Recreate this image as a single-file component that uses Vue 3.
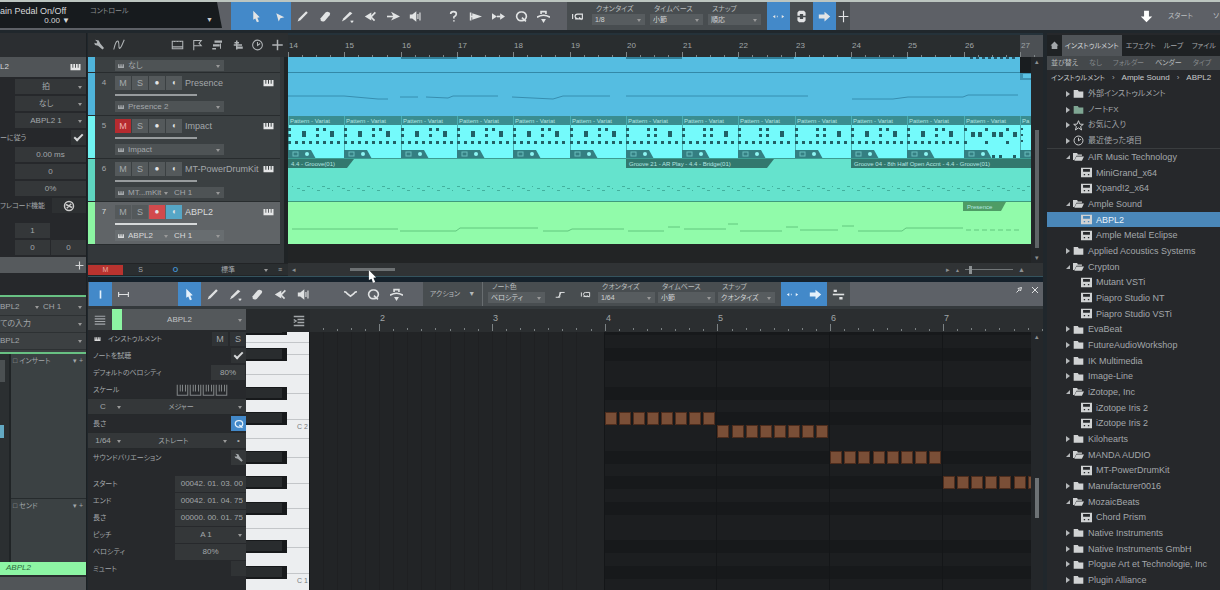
<script setup>
import { h } from 'vue'

// Each shape is [path, mode]: f = filled, s = stroked
const shapes = {
  arrow: [['M4 1 L12 9 L9 9.5 L11 14 L8.5 15 L6.5 10.5 L4 12 Z', 'f']],
  range: [['M4 4 L14 9 L9 10 L7 14 Z', 'f']],
  pencil: [['M2 14 L3.5 10.5 L12.5 1.5 L14.5 3.5 L5.5 12.5 Z', 'f']],
  brush: [['M1 14 L3 10 L11 2 L14 4 L5 12 Z', 'f'], ['M12 13 L13.5 15 L15 13', 's']],
  eraser: [['M2 10 L8 3 Q9 2 10.5 2 L13 3 Q14.5 4.5 13 6.5 L7 13.5 Q4 15 2 13 Z', 'f']],
  mute: [['M1 8 L9 3 V13 Z', 'f'], ['M7 10 L14 3 M8 8 L13 13', 's2']],
  bend: [['M0 8 H9', 's2'], ['M5 2 L16 8 L5 13 L8 8 Z', 'f']],
  speaker: [['M1 5.5 H4 L9 1.5 V14.5 L4 10.5 H1 Z', 'f'], ['M11 5 V11 M13.5 3 V13', 's']],
  help: [['M4.5 5 Q4.5 2 8 2 Q11.5 2 11.5 5 Q11.5 7 8.5 8.5 V10.5 M8.5 12.5 V14', 's2']],
  startTo: [['M2 3 V13 M2 8 H8', 's2'], ['M4 4 L16 8 L4 12 Z', 'f']],
  toEnd: [['M0 4 L6 8 L0 12 Z M10 4 L16 8 L10 12 Z', 'f'], ['M6 8 H10', 's2']],
  q: [['M8 2.5 A5.3 5.3 0 1 0 8 13 A5.3 5.3 0 1 0 8 2.5 M8.5 9.5 L13.5 14', 's2']],
  macro: [['M0 9 Q8 4 16 9 M5 5 V2 H11 V5', 's2'], ['M5 11 H11 L8 16 Z', 'f']],
  smile: [['M0 5 Q2 4 4 7 L8 10 L12 7 Q14 4 16 5', 's2']],
  iq: [['M2 5 V11 M5 11 H14 V5 H8 Q5 5 5 8 Q5 10 9 11 M10 9 L13 12', 's']],
  dots: [['M1 8 L4 6 V10 Z M15 8 L12 6 V10 Z M6 7 H7 V9 H6 Z', 'f']],
  updown: [['M5 1 H11 L13 3 V7 H10 V5 H6 V7 H3 V3 Z M3 9 H6 V11 H10 V9 H13 V13 L11 15 H5 L3 13 Z', 'f']],
  right: [['M1 5.5 H8 V2 L15 8 L8 14 V10.5 H1 Z', 'f']],
  cross: [['M8 1 V15 M2 8 H14', 's']],
  split: [['M1 8 H15', 's2'], ['M2 2 H6 V5 H2 Z M9 11 H13 V14 H9 Z', 'f']],
  down: [['M5 1 H11 V8 H15 L8 15 L1 8 H5 Z', 'f']],
  wrench: [['M2 1 L7 2 L9 6 L14 12 L12 14 L6 9 L2 8 L1 5 L4 6 L5 4 Z', 'f']],
  curve: [['M1 14 Q4 1 7 3 Q8 5 8 11 Q9 15 12 8 L15 1', 's']],
  film: [['M1 3 H15 V13 H1 Z M1 10.5 H15 M4 3 V4 M8 3 V4 M12 3 V4', 's']],
  flag: [['M3 15 V2 H13 L10 5.5 L13 9 H3', 's']],
  steps: [['M4 2 H14 V5 H4 Z M2 7 H11 V10 H2 Z M1 12 H6 V14 H1 Z', 'f'], ['M12 6 V13', 's']],
  mix: [['M3 8 H14 M7 2 V14', 's2'], ['M4 4 H10 V6 H4 Z M6 10 H15 V13 H6 Z', 'f']],
  clock: [['M8 1.5 A6.5 6.5 0 1 0 8 14.5 A6.5 6.5 0 1 0 8 1.5 M8 4 V8.5 L11.5 6', 's']],
  plus: [['M8 1 V15 M1 8 H15', 's2']],
  keys: [['M0 3 H16 V13 H0 Z M3 3 V9 H4.5 V3 Z M7.2 3 V9 H8.8 V3 Z M11.5 3 V9 H13 V3 Z', 'e']],
  folder: [['M1 3 H7 L8.5 5 H15 V14 H1 Z', 'f']],
  open: [['M0 3 H6 L7 5 H13 V7 H5 L2 13 H0 Z M5 8 H16 L13 14 H2 Z', 'f']],
  plug: [['M0 1 H16 V15 H0 Z M3 3 V7 H13 V3 Z M4 10 V12 H6 V10 Z M10 10 V12 H12 V10 Z', 'e']],
  star: [['M8 1 L10 6 L15 6.3 L11 9.5 L12.5 14.5 L8 11.5 L3.5 14.5 L5 9.5 L1 6.3 L6 6 Z', 's']],
  home: [['M8 1 L15 8 H13 V14 H3 V8 H1 Z', 'f']],
  list: [['M1 3 H15 M1 6.5 H15 M1 10 H15 M1 13.5 H15', 's']],
  indent: [['M1 2 H15 M6 6 H15 M6 10 H15 M1 14 H15 M1 6 L4 8 L1 10', 's2']],
  info: [['M7 3 H9 V13 H7 Z', 'f']],
  hbar: [['M2 5 V11 M14 5 V11 M2 8 H14', 's']],
  pin: [['M3 13 L8 8 M6 5 L11 10 L13 3 Z', 's2']],
  close: [['M2 2 L14 14 M14 2 L2 14', 's2']],
  step: [['M1 12 H7 V5 H14 M5 12 L9 5', 's']],
  scale: [['M1 1 V15 H15 V1 M5 1 V10 M8 1 V10 M12 1 V10', 's']],
  record: [['M8 2 A6 6 0 1 0 8 14 A6 6 0 1 0 8 2 M4 6 L12 10 M5 11 L11 5', 's2']],
}
const Icon = (p) =>
  h('svg', { viewBox: '0 0 16 16', 'aria-hidden': 'true' }, shapes[p.n].map(([d, m]) =>
    h('path', m[0] === 's'
      ? { d, fill: 'none', stroke: 'currentColor', 'stroke-width': m === 's2' ? 2 : 1.4 }
      : { d, fill: 'currentColor', 'fill-rule': m === 'e' ? 'evenodd' : 'nonzero' })))
Icon.props = ['n']

const mainTools = ['pencil', 'eraser', 'brush', 'mute', 'bend', 'speaker']
const helpTools = ['help', 'startTo', 'toEnd', 'q', 'macro']
const topFields = [['クオンタイズ', '1/8'], ['タイムベース', '小節'], ['スナップ', '順応']]
const noteTools = ['pencil', 'brush', 'eraser', 'mute', 'speaker']
const editFields = [['クオンタイズ', '1/64'], ['タイムベース', '小節'], ['スナップ', 'クオンタイズ']]
const headTools = ['film', 'flag', 'steps', 'mix', 'clock', 'plus']

const tracks = [
  { no: 4, name: 'Presence', color: '#4fb4da', out: 'Presence 2' },
  { no: 5, name: 'Impact', color: '#70f3f2', out: 'Impact', muted: true },
  { no: 6, name: 'MT-PowerDrumKit', color: '#5fd5c0', out: 'MT...mKit', ch: 'CH 1' },
  { no: 7, name: 'ABPL2', color: '#8cf5a2', out: 'ABPL2', ch: 'CH 1', on: true },
]

// Arrangement time axis
const BAR = 56.3
const barX = (n) => Math.round((n - 14) * BAR)
const bars = Array.from({ length: 14 }, (_, i) => i + 14)
const ticks = bars.flatMap((b) => [0, 1, 2, 3].map((q) => ({ x: barX(b + q / 4), big: q === 0 })))
const hits = bars.flatMap((b) => {
  const x = barX(b)
  if (b === 27) return [0, 1, 2].map((i) => [x + 1, 71 + i * 6, 2, 2])
  if (b === 26) {
    return [[0, 71], [21, 71], [42, 71], [0, 84], [21, 84], [42, 84], [28, 98], [35, 98], [49, 98]]
      .map(([dx, y]) => [x + dx, y, 3, 3])
      .concat([7, 14, 28, 35, 49].map((dx) => [x + dx, 75, 4, 5]))
  }
  const mid = b > 19 && b < 24
  const small = mid ? [[0, 71], [21, 71], [28, 71], [0, 77], [21, 77], [28, 77]]
    : [[0, 71], [28, 71], [35, 71], [0, 77], [28, 77]]
  return small.concat([0, 7, 14, 21, 28, 35, 42, 49].map((d) => [d, 84]))
    .map(([dx, y]) => [x + dx, y, 3, 3])
    .concat((mid ? [42] : [14, 42]).map((dx) => [x + dx, 74, 4, 6]))
})
const drumHits = Array.from({ length: 148 }, (_, i) => [i * 5 + 4, 129 + ((i * 7) % 3) * 2, (i * 5) % 4 ? 3 : 1])
const grooves = [
  { x: 0, w: 66, t: '4.4 - Groove(01)' },
  { x: barX(20), w: 148, t: 'Groove 21 - AR Play - 4.4 - Bridge(01)' },
  { x: barX(24), w: 200, t: 'Groove 04 - 8th Half Open Accnt - 4.4 - Groove(01)' },
]
const lead = 'M0 39 H56 L90 42 H100 M112 40 H130 M138 40 L160 41 L165 39 H210 M224 40 L265 42 L275 39 H322 M338 39 H520 M564 42 H605 L620 40 H675 L680 38 H730'
const bass = 'M4 172 H110 M112 174 H168 L172 171 H250 M255 174 H280 L284 172 H336 M340 174 H376 M380 170 H392 M396 172 H438 M440 167 H450 M452 174 H494 M498 170 H510 M512 173 H550 M554 169 H566 M570 174 H614 L618 171 H675 '

// Piano roll: rows are measured from the top of the grid
const SEMI = 12.83
const rowY = (k) => Math.round(93 + k * SEMI)
const blackRows = [-8, -6, -3, -1, 2, 4, 6, 9, 11]
const whiteEdges = [-6.5, -4, 1, 8, 13, -5.5, -2.5, -0.5, 2.5, 4.5, 6.5, 9.5, 11.5].map(rowY)
const QBAR = 112.8
const rollX = (n) => Math.round(69 + (n - 2) * QBAR)
const rollTicks = Array.from({ length: 54 }, (_, i) => ({ x: rollX(1.375 + i / 8), big: (i + 3) % 8 === 0, mid: i % 2 === 1 }))
const notes = [[4, -1], [5, 0], [6, 2], [7, 4]].flatMap(([b, k]) =>
  Array.from({ length: 8 }, (_, i) => ({ x: rollX(b + i / 8), y: rowY(k) })))

const position = [['スタート', '00042. 01. 03. 00'], ['エンド', '00042. 01. 04. 75'], ['長さ', '00000. 00. 01. 75']]

const tree = [
  ['外部インストゥルメント', 'c', 'folder', 'jp'], ['ノートFX', 'c', 'folder', 'jp fx'], ['お気に入り', 'c', 'star', 'jp'],
  ['最近使った項目', 'c', 'clock', 'jp last'], ['AIR Music Technology', 'o'], ['MiniGrand_x64', 'p'],
  ['Xpand!2_x64', 'p'], ['Ample Sound', 'o'], ['ABPL2', 'p', '', 'picked'], ['Ample Metal Eclipse', 'p'],
  ['Applied Acoustics Systems', 'c'], ['Crypton', 'o'], ['Mutant VSTi', 'p'], ['Piapro Studio NT', 'p'],
  ['Piapro Studio VSTi', 'p'], ['EvaBeat', 'c'], ['FutureAudioWorkshop', 'c'], ['IK Multimedia', 'c'],
  ['Image-Line', 'c'], ['iZotope, Inc', 'o'], ['iZotope Iris 2', 'p'], ['iZotope Iris 2', 'p'],
  ['Kilohearts', 'c'], ['MANDA AUDIO', 'o'], ['MT-PowerDrumKit', 'p'], ['Manufacturer0016', 'c'],
  ['MozaicBeats', 'o'], ['Chord Prism', 'p'], ['Native Instruments', 'c'], ['Native Instruments GmbH', 'c'],
  ['Plogue Art et Technologie, Inc', 'c'], ['Plugin Alliance', 'c'],
].map(([name, kind, icon, mark]) => ({
  name, kind, mark, icon: icon || { c: 'folder', o: 'open', p: 'plug' }[kind],
}))
</script>

<template>
  <div class="daw">
    <header class="topbar">
      <div class="display">
        <div class="param"><span>ain Pedal On/Off</span><button class="val">0.00 ▼</button></div>
        <span class="ctl">コントロール</span>
        <button class="more" aria-label="メニュー">▼</button>
      </div>
      <div class="blue lead">
        <button class="tb" aria-label="矢印"><Icon n="arrow" /></button>
        <button class="tb" aria-label="範囲"><Icon n="range" /></button>
      </div>
      <div class="tools main"><button v-for="t in mainTools" :key="t" class="tb" :aria-label="t"><Icon :n="t" /></button></div>
      <div class="tools aux"><button v-for="t in helpTools" :key="t" class="tb" :aria-label="t"><Icon :n="t" /></button></div>
      <div class="snap upper">
        <button class="tb iq" aria-label="IQ"><Icon n="iq" /></button>
        <label v-for="f in topFields" :key="f[0]" class="field">
          <span>{{ f[0] }}</span>
          <span class="sel"><select><option>{{ f[1] }}</option></select></span>
        </label>
        <button class="tb blue first" aria-label="スナップ"><Icon n="dots" /></button>
        <button class="tb" aria-label="縦"><Icon n="updown" /></button>
        <button class="tb blue" aria-label="追従"><Icon n="right" /></button>
        <button class="tb end" aria-label="カーソル"><Icon n="cross" /></button>
      </div>
      <div class="pages">
        <button class="tb" aria-label="ダウンロード"><Icon n="down" /></button>
        <button>スタート</button>
        <button>ソ</button>
      </div>
    </header>

    <main class="body">
      <aside class="left">
        <div class="lhead"></div>
        <div class="ltitle"><span>L2</span><Icon n="keys" class="kb" /></div>
        <div v-for="v in ['拍', 'なし', 'ABPL2 1']" :key="v" class="lrow">
          <span class="sel box"><select :aria-label="v"><option>{{ v }}</option></select></span>
        </div>
        <label class="lrow text"><span>ーに従う</span><input type="checkbox" checked></label>
        <div v-for="v in ['0.00 ms', '0', '0%']" :key="v" class="lrow"><input class="box" :value="v" :aria-label="'値 ' + v"></div>
        <div class="lrow text pre"><span>フレコード機能</span><button aria-label="記録"><Icon n="record" /></button></div>
        <div class="lrow one"><input class="box" value="1" aria-label="開始"></div>
        <div class="lrow two"><input class="box" value="0" aria-label="下限"><input class="box" value="0" aria-label="上限"></div>
        <div class="adder"><button aria-label="追加"><Icon n="plus" /></button></div>
        <div class="channel">
          <div class="crow"><span class="sel"><select aria-label="出力"><option>BPL2</option></select></span><span class="sel"><select aria-label="チャンネル"><option>CH 1</option></select></span></div>
          <div class="crow"><span class="sel"><select aria-label="入力"><option>ての入力</option></select></span></div>
          <div class="crow"><span class="sel"><select aria-label="楽器"><option>BPL2</option></select></span></div>
        </div>
        <div class="strips">
          <div class="meter"><i></i><b></b></div>
          <div class="racks">
            <div class="rack"><span>□ インサート</span><span>▾ +</span></div>
            <div class="rack"><span>□ センド</span><span>▾ +</span></div>
          </div>
        </div>
        <div class="chname">ABPL2</div>
        <div class="lfoot"></div>
      </aside>

      <section class="center">
        <div class="arrange">
          <div class="ahead">
            <button aria-label="設定"><Icon n="wrench" /></button>
            <button aria-label="オートメーション"><Icon n="curve" class="wide" /></button>
            <span class="grow"></span>
            <button v-for="t in headTools" :key="t" :aria-label="t"><Icon :n="t" /></button>
          </div>
          <div class="aruler">
            <svg class="fill">
              <rect :x="barX(27)" y="0" width="30" height="24" fill="#4c5054" />
              <rect v-for="(t, i) in ticks" :key="i" :x="t.x" :y="t.big ? 17 : 20" width="1" :height="t.big ? 6 : 2" fill="#808688" />
              <text v-for="b in bars" :key="b" :x="barX(b) + 1" y="13" class="num">{{ b }}</text>
            </svg>
          </div>
          <div class="tracks">
            <div class="track part"><i class="strip s0"></i><div class="tmain"><span class="sel out"><Icon n="keys" /><select aria-label="出力 3"><option>なし</option></select></span></div></div>
            <div v-for="t in tracks" :key="t.no" class="track" :class="{ on: t.on }">
              <i class="strip" :style="{ background: t.color }"></i>
              <span class="no">{{ t.no }}</span>
              <div class="tmain">
                <div class="trow">
                  <button class="k" :class="{ red: t.muted }">M</button><button class="k">S</button>
                  <button class="k" :class="{ rec: t.on }">●</button><button class="k" :class="{ mon: t.on }">◖</button>
                  <span class="tname">{{ t.name }}</span><Icon n="keys" class="kb" />
                </div>
                <input class="vol" type="range" :aria-label="t.name + ' 音量'">
                <div class="outs">
                  <span class="sel out" :class="{ half: t.ch }"><Icon n="keys" /><select :aria-label="t.name + ' 出力'"><option>{{ t.out }}</option></select></span>
                  <span v-if="t.ch" class="sel out ch"><select :aria-label="t.name + ' チャンネル'"><option>{{ t.ch }}</option></select></span>
                </div>
              </div>
            </div>
          </div>
          <div class="clips">
            <svg class="fill">
              <rect width="100%" height="60" fill="#55bde1" />
              <rect v-for="b in [16, 20, 22, 24]" :key="b" :x="barX(b)" y="0" width="56" height="2" fill="#317f98" />
              <rect v-for="i in 8" :key="i" :x="barX(26) + i * 6" y="0" width="3" height="2" fill="#24586b" />
              <rect y="15" width="100%" height="1" fill="#3389a8" />
              <path :d="lead" class="line" stroke="#378eb0" />
              <rect :x="barX(27)" y="0" width="30" height="16" fill="#191d20" />
              <rect :x="barX(27)" y="16" width="30" height="7" fill="#3f93b3" />
              <rect :x="barX(27) + 3" y="17" width="30" height="4" fill="#5bc2e4" />
              <rect y="59" width="100%" height="43" fill="#74fafb" />
              <rect y="59" width="100%" height="9" fill="#3a8d90" />
              <g v-for="b in bars" :key="b">
                <text :x="barX(b) + 2" y="66" class="tiny">{{ b === 27 ? 'Pa' : 'Pattern - Variat' }}</text>
                <rect :x="barX(b)" y="59" width="1" height="43" fill="#49aeb0" />
                <path :d="`M${barX(b)} 93 h23 l5 9 h-28 z`" fill="#347f82" />
                <rect :x="barX(b) + 5" y="95" width="5" height="4" fill="none" stroke="#69bdbc" />
                <circle :cx="barX(b) + 19" cy="97" r="2" fill="#8df5f2" />
              </g>
              <rect v-for="(d, i) in hits" :key="i" :x="d[0]" :y="d[1]" :width="d[2]" :height="d[3]" fill="#225f65" />
              <rect y="102" width="100%" height="43" fill="#65e3cd" />
              <rect y="101" width="100%" height="1" fill="#3d9d93" />
              <g v-for="g in grooves" :key="g.x">
                <path :d="`M${g.x} 102 h${g.w} l-7 9 h-${g.w - 7} z`" fill="#32786e" />
                <text :x="g.x + 3" y="109" class="tiny">{{ g.t }}</text>
              </g>
              <rect v-for="(d, i) in drumHits" :key="i" :x="d[0]" :y="d[1]" :width="d[2]" height="1" fill="#43b09d" />
              <rect y="145" width="100%" height="42" fill="#91fbaa" />
              <rect y="144" width="100%" height="1" fill="#3f9b7d" />
              <path d="M675 145 h43 l-5 9 h-38 z" fill="#4e9c65" />
              <text x="679" y="152" class="tiny">Presence</text>
              <path :d="bass" class="line" stroke="#62c77f" />
              <path d="M678 173 H732" class="line" stroke="#62c77f" stroke-dasharray="5 3" />
            </svg>
          </div>
          <div class="vbar"><span>▴</span><i class="thumb"></i><span>▾</span></div>
          <div class="afoot">
            <button class="mred">M</button><button>S</button><button class="ring">O</button>
            <span class="sel std"><select aria-label="高さ"><option>標準</option></select></span><button>≡</button>
          </div>
          <div class="hbar">
            <span>◂</span><div class="lane"><i></i>
              <svg class="cursor" viewBox="0 0 10 14" aria-hidden="true"><path d="M1 0 L9 8 L6 8.5 L8 13 L5.5 14 L4 9.5 L1 11 Z" fill="#fff" /></svg>
            </div>
            <span>▸</span><span class="s">▲</span><input type="range" value="8" aria-label="ズーム"><span>▲</span>
          </div>
        </div>

        <div class="editor">
          <div class="ebar">
            <button class="tb blue" aria-label="情報"><Icon n="info" /></button>
            <button class="tb" aria-label="幅"><Icon n="hbar" /></button>
            <button class="tb blue pick" aria-label="矢印"><Icon n="arrow" /></button>
            <div class="tools notes"><button v-for="t in noteTools" :key="t" class="tb" :aria-label="t"><Icon :n="t" /></button></div>
            <div class="tools ops"><button v-for="t in ['smile', 'q', 'macro']" :key="t" class="tb" :aria-label="t"><Icon :n="t" /></button></div>
            <div class="snap lower">
              <button class="act">アクション <span>▼</span></button>
              <label class="field"><span>ノート色</span><span class="sel"><select><option>ベロシティ</option></select></span></label>
              <button class="tb st" aria-label="ステップ"><Icon n="step" /></button>
              <button class="tb st" aria-label="IQ"><Icon n="iq" /></button>
              <label v-for="f in editFields" :key="f[0]" class="field">
                <span>{{ f[0] }}</span>
                <span class="sel"><select><option>{{ f[1] }}</option></select></span>
              </label>
              <button class="tb blue first" aria-label="スナップ"><Icon n="dots" /></button>
              <button class="tb blue" aria-label="追従"><Icon n="right" /></button>
              <button class="tb" aria-label="分割"><Icon n="split" /></button>
            </div>
            <span class="grow"></span>
            <button class="win" aria-label="固定"><Icon n="pin" /></button>
            <button class="win" aria-label="閉じる"><Icon n="close" /></button>
          </div>
          <div class="ebody">
            <div class="inspector">
              <div class="ihead"><Icon n="list" /><i></i><span class="sel"><select aria-label="トラック"><option>ABPL2</option></select></span></div>
              <div class="irow"><span><Icon n="keys" class="mini" />インストゥルメント</span><span class="pair"><button>M</button><button>S</button></span></div>
              <label class="irow"><span>ノートを試聴</span><input type="checkbox" checked></label>
              <label class="irow"><span>デフォルトのベロシティ</span><input class="box pct" value="80%"></label>
              <div class="irow"><span>スケール</span><span class="scales"><Icon v-for="i in 4" :key="i" n="scale" /></span></div>
              <div class="irow bar"><span class="sel a"><select aria-label="ルート"><option>C</option></select></span><span class="sel b"><select aria-label="スケール"><option>メジャー</option></select></span></div>
              <div class="irow"><span>長さ</span><button class="blue sq" aria-label="クオンタイズ"><Icon n="q" /></button></div>
              <div class="irow bar"><span class="sel a"><select aria-label="音価"><option>1/64</option></select></span><span class="sel b"><select aria-label="種類"><option>ストレート</option></select></span><button class="dot">•</button></div>
              <div class="irow gap"><span>サウンドバリエーション</span><button class="box sq" aria-label="編集"><Icon n="wrench" /></button></div>
              <label v-for="p in position" :key="p[0]" class="irow"><span>{{ p[0] }}</span><input class="box pos" :value="p[1]"></label>
              <label class="irow"><span>ピッチ</span><span class="sel box v"><select><option>A 1</option></select></span></label>
              <label class="irow"><span>ベロシティ</span><input class="box v" value="80%"></label>
              <label class="irow"><span>ミュート</span><input type="checkbox"></label>
            </div>
            <div class="khead"><Icon n="indent" /></div>
            <div class="eruler">
              <svg class="fill">
                <rect v-for="(t, i) in rollTicks" :key="i" :x="t.x" :y="t.big ? 15 : t.mid ? 19 : 20" width="1" :height="t.big ? 7 : 2" fill="#7b8183" />
                <text v-for="b in [2, 3, 4, 5, 6, 7]" :key="b" :x="rollX(b) + 1" y="12" class="num big">{{ b }}</text>
              </svg>
            </div>
            <div class="keyboard">
              <svg class="fill">
                <rect width="100%" height="100%" fill="#eceef0" />
                <rect v-for="(y, i) in whiteEdges" :key="i" :y="y" width="100%" height="1" fill="#c3c6c9" />
                <g v-for="k in blackRows" :key="k">
                  <rect :y="rowY(k)" width="41" height="13" fill="#17191b" />
                  <rect :y="rowY(k) + 1" width="36" height="10" fill="#292c2e" />
                </g>
                <text x="51" y="97" class="key">C 2</text>
                <text x="51" y="251" class="key">C 1</text>
              </svg>
            </div>
            <div class="roll">
              <svg class="fill">
                <rect width="100%" height="100%" fill="#222426" />
                <rect v-for="i in 20" :key="i" :x="rollX(1.25 + i / 8)" y="0" width="1" height="100%" fill="#1f2022" />
                <rect :x="rollX(4) - 1" y="0" width="100%" height="100%" fill="#1c1e20" />
                <rect v-for="k in blackRows" :key="k" :x="rollX(4) - 1" :y="rowY(k)" width="100%" height="13" fill="#17191b" />
                <rect v-for="b in [4, 5, 6, 7]" :key="b" :x="rollX(b) - 1" y="0" width="1" height="100%" fill="#141618" />
                <g v-for="(n, i) in notes" :key="i">
                  <rect :x="n.x" :y="n.y" width="12" height="13" fill="#4e2d1d" />
                  <rect :x="n.x + 1" :y="n.y + 1" width="10" height="11" fill="#7a4f37" />
                </g>
              </svg>
            </div>
            <div class="vbar short"><span>▴</span><i class="thumb"></i></div>
          </div>
        </div>
      </section>

      <aside class="browser">
        <nav class="tabs">
          <button aria-label="ホーム"><Icon n="home" /></button><button class="cur">インストゥルメント</button><button>エフェクト</button><button>ループ</button><button>ファイル</button>
        </nav>
        <div class="sort"><span class="hi">並び替え</span><button>なし</button><button>フォルダー</button><button class="hi">ベンダー</button><button>タイプ</button></div>
        <nav class="crumbs"><a href="#">インストゥルメント</a><span>›</span><a href="#">Ample Sound</a><span>›</span><a href="#">ABPL2</a></nav>
        <ul class="tree">
          <li v-for="(r, i) in tree" :key="i" :class="[r.kind, r.mark]">
            <button><i v-if="r.kind !== 'p'" class="tw"></i><Icon :n="r.icon" /><span>{{ r.name }}</span></button>
          </li>
        </ul>
      </aside>
    </main>
  </div>
</template>

<style>
html, body { background: #1d2023; overflow: hidden; }
</style>

<style scoped>
.daw, .daw * { box-sizing: border-box; }
.daw {
  height: 100vh; display: grid; grid-template-rows: 30px minmax(0, 1fr); background: #20272c; color: #a3a7aa;
  font-family: "Liberation Sans", "Noto Sans CJK JP", sans-serif; font-size: 8px; line-height: 10px;
  font-feature-settings: "palt"; overflow: hidden; white-space: nowrap;
}
button, select, input { font: inherit; color: inherit; font-feature-settings: inherit; background: none; border: 0; padding: 0; margin: 0; border-radius: 0; min-width: 0; }
button { display: inline-flex; align-items: center; justify-content: center; }
svg { width: 12px; height: 12px; flex: none; display: block; }
.fill { width: 100%; height: 100%; }
i { display: block; }
.grow { flex: 1; }
.blue { background: #4389c9; color: #e5f1fb; }
.sel { position: relative; display: flex; align-items: center; min-width: 0; }
.sel select { appearance: none; width: 100%; padding-right: 9px; outline: 0; }
.sel::after { content: ""; position: absolute; right: 4px; top: calc(50% - 1px); border: 2px solid transparent; border-top: 3px solid #999; border-bottom: 0; pointer-events: none; }
.sel.box select { text-align-last: center; }
.box { background: #343739; text-align: center; }

.topbar { display: flex; border-top: 2px solid #bcc5c0; background: #5d6066; }
.topbar .tb { color: #e2e4e5; }
.display { width: 222px; height: 26px; background: #171b1e; clip-path: polygon(0 0, 217px 0, 100% 100%, 0 100%); display: flex; }
.param { width: 90px; display: flex; flex-direction: column; color: #d7d9da; font-size: 9px; padding-top: 4px; }
.param .val { align-self: flex-end; margin-right: 20px; font-size: 8px; }
.ctl { color: #8a8e90; font-size: 7px; padding-top: 4px; }
.more { margin: 12px 9px 0 auto; height: 12px; color: #ccc; font-size: 7px; }
.tb { width: 23px; height: 100%; flex: none; }
.tb svg { width: 13px; height: 13px; }
.lead { margin-left: 9px; padding-left: 14px; display: flex; }
.tools { display: flex; }
.tools .tb { flex: 1; width: auto; }
.main { width: 136px; }
.aux { width: 113px; margin-left: 15px; }
.snap { display: flex; background: #484d50; }
.upper { margin-left: 12px; }
.snap .iq { width: 20px; margin-right: 5px; }
.field { width: 53px; margin-right: 5px; padding-top: 2px; display: flex; flex-direction: column; color: #b9bdbf; font-size: 7px; flex: none; }
.field > span:first-child { padding-left: 4px; }
.field .sel { background: #575c5f; height: 11px; }
.field select { padding-left: 3px; color: #d0d3d4; }
.upper .first { margin-left: 1px; }
.upper .end { width: 14px; }
.pages { margin-left: auto; display: flex; align-items: center; color: #bbbec0; font-size: 7px; }
.pages button:not(.tb) { margin-left: 10px; width: 25px; }
.pages button:last-child:not(.tb) { width: 8px; margin-left: 19px; }
.pages .tb svg { color: #fff; }

.body { display: grid; grid-template-columns: 87px minmax(0, 1fr) 173px; padding-top: 3px; min-height: 0; }

.left { background: #26282b; display: flex; flex-direction: column; min-height: 0; border-right: 1px solid #1c2023; overflow: hidden; }
.lhead { height: 24px; background: #2b2e31; flex: none; }
.ltitle { height: 20px; background: #505457; display: flex; justify-content: space-between; align-items: center; padding: 0 4px 0 0; margin-bottom: 1px; flex: none; color: #d5d7d8; }
.kb { width: 13px; height: 10px; color: #e5e6e7; }
.lrow { height: 17px; flex: none; padding: 1px 0 1px 15px; display: flex; gap: 1px; }
.lrow .box { width: 100%; height: 100%; }
.text { padding-left: 0; align-items: center; justify-content: space-between; font-size: 7px; }
.pre { margin-bottom: 8px; }
.pre button { width: 34px; height: 100%; background: #2d3032; color: #ccc; }
.one .box { width: 35px; }
.adder { height: 16px; margin-top: 1px; background: #565a5d; display: flex; justify-content: flex-end; padding-right: 2px; flex: none; color: #d5d7d8; }
.adder svg { width: 9px; height: 9px; }
.channel { margin-top: 22px; border-top: 2px solid #68c183; border-bottom: 2px solid #68c183; background: #3c4042; flex: none; padding: 2px 0; }
.crow { height: 17px; display: flex; border-bottom: 1px solid #2d3133; }
.crow .sel { flex: 1; }
.strips { flex: 1; display: flex; min-height: 0; }
.meter { width: 11px; background: #2b2f31; border-right: 2px solid #202426; display: flex; flex-direction: column; padding-top: 6px; }
.meter i { height: 22px; width: 5px; background: #4b5052; }
.meter b { height: 13px; width: 4px; margin-top: 43px; background: #63a9c3; }
.racks { flex: 1; display: flex; flex-direction: column; background: #3b4143; font-size: 7px; }
.rack { flex: 0 0 144px; display: flex; justify-content: space-between; padding: 2px 3px 0 2px; }
.rack + .rack { flex: 1; border-top: 1px solid #262b2d; }
.chname { height: 13px; background: #8df5a4; color: #2b6a3c; padding: 1px 0 0 6px; flex: none; font-style: italic; }
.lfoot { height: 15px; background: #515558; flex: none; border-top: 2px solid #2a2d2f; }

.center { display: grid; grid-template-rows: 244px minmax(0, 1fr); gap: 5px; margin: 0 4px 0 1px; min-width: 0; background: #15212b; }
.arrange { display: grid; grid-template-columns: 200px minmax(0, 1fr) 12px; grid-template-rows: 24px minmax(0, 1fr) 13px; background: #222426; border-bottom: 1px solid #34535e; min-width: 0; }
.ahead { background: #2c2f31; display: flex; align-items: center; padding: 0 1px; color: #b0b4b6; }
.ahead button { width: 20px; }
.ahead .wide { width: 16px; }
.ahead svg { width: 13px; }
.aruler { grid-column: 2 / 4; background: #292d2f; border-top: 2px solid #25323a; }
.num { font-size: 8px; fill: #a0a5a7; }
.num.big { font-size: 9px; }
.tiny { font-size: 6px; fill: #b3e6e2; }
.line { fill: none; stroke-width: 1; }
.tracks { background: #33373a; overflow: hidden; display: flex; flex-direction: column; border-right: 4px solid #1f2325; }
.track { height: 43px; flex: none; display: flex; background: #3b4042; border-bottom: 1px solid #282c2e; margin-right: 4px; }
.track.part { height: 16px; padding: 0; }
.strip { width: 7px; margin-right: 2px; flex: none; }
.s0 { background: #4fb4da; }
.no { width: 14px; text-align: center; padding-top: 5px; }
.tmain { flex: 1; padding: 3px 4px 0; min-width: 0; }
.part .tmain { padding-left: 18px; }
.on { background: #606467; color: #d8dadb; }
.trow { display: flex; align-items: center; gap: 1px; }
.k { width: 16px; height: 14px; background: #54595b; color: #a5a9ab; font-size: 9px; flex: none; }
.k:nth-child(n+3) { font-size: 8px; color: #e3e4e5; }
.k.red { background: #b52b2f; color: #f0b0b0; }
.k.rec { background: #d24a4d; }
.k.mon { background: #56a6c6; }
.tname { margin-left: 2px; width: 76px; font-size: 9px; }
.vol { display: block; appearance: none; width: 82px; height: 2px; background: #989c9e; margin: 4px 0 5px; }
.vol::-webkit-slider-thumb { appearance: none; width: 0; height: 0; }
.on .vol { background: #d6d8d9; }
.outs { display: flex; width: 109px; }
.out { background: #4e5355; width: 109px; height: 11px; padding-left: 2px; gap: 3px; }
.out svg { width: 8px; height: 6px; }
.out.half { width: 57px; flex: none; }
.out.half select { padding-right: 0; width: 38px; }
.out.ch { width: 52px; }
.on .out { background: #686d70; }
.clips { background: #222425; min-width: 0; overflow: hidden; }
.vbar { background: #24272a; display: flex; flex-direction: column; align-items: center; font-size: 7px; color: #8b8f91; }
.vbar .thumb { width: 4px; height: 118px; background: #5f6467; margin: 63px 0 5px; }
.vbar.short .thumb { height: 40px; margin: 136px 0 0; background: #6d7275; }
.afoot { background: #2a2e30; display: flex; align-items: center; margin: 1px 0; }
.afoot button { width: 35px; height: 10px; font-size: 7px; }
.afoot .mred { background: #b8332f; color: #e6aaa5; }
.afoot .ring { color: #4291cd; font-weight: bold; }
.afoot button:last-child { width: 16px; }
.std { width: 79px; font-size: 7px; }
.std select { text-align-last: center; }
.hbar { grid-column: 2 / 4; background: #303335; display: flex; align-items: center; gap: 5px; font-size: 7px; padding: 0 18px 0 4px; color: #8c9092; }
.hbar .s { font-size: 5px; }
.lane { flex: 1; position: relative; }
.lane > i { width: 45px; height: 3px; background: #6d7173; margin-left: 49px; }
.cursor { position: absolute; left: 67px; top: 2px; width: 9px; height: 13px; z-index: 2; }
.hbar input { appearance: none; width: 48px; height: 1px; background: #727779; }
.hbar input::-webkit-slider-thumb { appearance: none; width: 3px; height: 8px; background: #8c9193; }

.editor { display: grid; grid-template-rows: 24px minmax(0, 1fr); gap: 3px; background: #34393c; min-width: 0; }
.ebar { background: #5d6167; display: flex; padding-left: 1px; color: #dfe1e2; min-width: 0; }
.pick { margin-left: 43px; }
.notes { width: 114px; }
.ops { width: 69px; margin-left: 24px; }
.lower { margin-left: 15px; }
.act { width: 60px; border-right: 1px solid #686d70; margin-right: 5px; gap: 8px; color: #b5b8ba; font-size: 7px; }
.lower .field { width: 57px; margin-right: 3px; padding-top: 0; }
.lower .first { margin-left: 3px; }
.lower .st { width: 25px; }
.lower .st svg { width: 11px; height: 11px; }
.win { width: 16px; height: 16px; }
.win svg { width: 8px; height: 8px; }
.ebody { display: grid; grid-template-columns: 158px 64px minmax(0, 1fr) 12px; grid-template-rows: 23px minmax(0, 1fr); min-height: 0; background: #222426; }
.inspector { grid-row: 1 / 3; background: #27292c; display: flex; flex-direction: column; overflow: hidden; }
.ihead { height: 21px; background: #3f4345; display: flex; align-items: center; padding-left: 6px; flex: none; }
.ihead i { width: 10px; height: 100%; background: #8cf5a2; margin-left: 6px; }
.ihead .sel { flex: 1; height: 100%; background: #54585b; }
.ihead select { text-align-last: center; color: #c0c3c5; }
.irow { height: 17px; flex: none; display: flex; align-items: center; justify-content: space-between; padding-left: 5px; }
.irow > span:first-child { display: flex; align-items: center; gap: 6px; font-size: 7px; }
.mini { width: 9px; height: 6px; color: #ddd; }
.pair { display: flex; gap: 2px; }
.pair button { width: 16px; height: 14px; background: #303336; font-size: 9px; }
.pct { width: 34px; height: 15px; margin-right: 1px; }
.scales { display: flex; margin-right: 18px; }
.scales svg { width: 13px; color: #808486; }
.bar { background: #343739; padding-left: 2px; border-top: 1px solid #26292b; border-bottom: 1px solid #26292b; }
.irow.bar > .a { width: 35px; flex: none; font-size: 8px; }
.bar .b { flex: 1; font-size: 7px; }
.bar select { text-align-last: center; }
.dot { width: 15px; }
.sq { width: 15px; height: 15px; }
.sq svg { width: 10px; height: 10px; }
.gap { margin-bottom: 9px; }
.pos, .v { width: 71px; height: 16px; }
.pos { text-align: right; padding-right: 3px; }
input[type="checkbox"] { appearance: none; width: 15px; height: 15px; background: #303335; display: flex; align-items: center; justify-content: center; }
input[type="checkbox"]:checked::after { content: ""; width: 7px; height: 3px; border-left: 2px solid #d5d7d8; border-bottom: 2px solid #d5d7d8; rotate: -45deg; translate: 0 -1px; }
.khead { background: #282b2d; display: flex; align-items: center; justify-content: flex-end; padding-right: 5px; }
.eruler { grid-column: 3 / 5; background: #2b2e30; }
.keyboard { border-right: 1px solid #17191b; min-height: 0; overflow: hidden; }
.key { font-size: 7px; fill: #777b7e; }
.roll { min-height: 0; overflow: hidden; }

.browser { background: #26282b; display: flex; flex-direction: column; min-height: 0; overflow: hidden; padding-top: 2px; }
.tabs { height: 21px; display: flex; background: #1f2224; flex: none; font-size: 7px; }
.tabs button { padding: 0 5px; }
.tabs button:first-child { padding: 0; width: 16px; }
.tabs button:first-child svg { width: 9px; height: 9px; }
.tabs .cur { background: #505458; color: #d4d6d8; }
.sort { height: 14px; background: #44484b; display: flex; align-items: center; gap: 11px; padding-left: 4px; flex: none; color: #83878a; font-size: 7px; }
.hi { color: #b8bbbd; }
.crumbs { height: 16px; display: flex; align-items: center; gap: 7px; padding-left: 4px; flex: none; }
.crumbs a { color: #c8cacc; text-decoration: none; }
.crumbs a:first-child { font-size: 7px; }
.tree { list-style: none; margin: 0; padding: 0 0 2px; flex: 1; display: flex; flex-direction: column; min-height: 0; font-size: 9px; }
.tree li { flex: 1; max-height: 16px; min-height: 0; display: flex; }
.tree button { flex: 1; justify-content: flex-start; padding-left: 19px; gap: 4px; }
.tree svg { width: 11px; height: 11px; color: #d0d2d3; }
.tree .p button { padding-left: 34px; }
.tree .jp { font-size: 8px; }
.tree .fx svg { color: #7fa693; }
.tree .last { border-bottom: 1px solid #3a3d3f; }
.tree .picked { background: #4a87b9; color: #e8f2fa; }
.tw { width: 0; height: 0; border: 3px solid transparent; border-left: 4px solid #b5b8ba; border-right: 0; margin-right: -1px; }
.o .tw { border: 0; border-left: 4px solid transparent; border-bottom: 4px solid #b5b8ba; }
</style>
